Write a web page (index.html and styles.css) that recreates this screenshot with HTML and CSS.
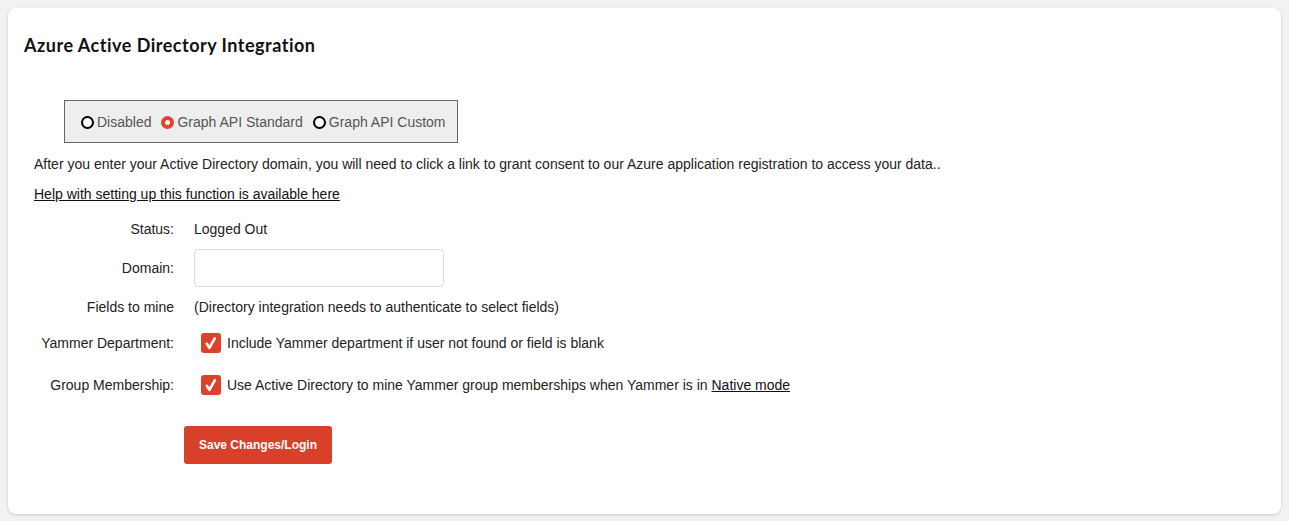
FILE: index.html
```html
<!DOCTYPE html>
<html>
<head>
<meta charset="utf-8">
<link rel="stylesheet" href="styles.css">
</head>
<body>
<div class="card">
  <h2 class="title">Azure Active Directory Integration</h2>
  <div class="radios">
    <span class="radio"><span class="ring"></span>Disabled</span>
    <span class="radio"><span class="ring on"></span>Graph API Standard</span>
    <span class="radio"><span class="ring"></span>Graph API Custom</span>
  </div>
  <p class="intro">After you enter your Active Directory domain, you will need to click a link to grant consent to our Azure application registration to access your data..</p>
  <p class="help"><a href="#">Help with setting up this function is available here</a></p>
  <div class="row r-status"><div class="label">Status:</div><div class="val">Logged Out</div></div>
  <div class="row r-domain"><div class="label">Domain:</div><div class="val"><input class="input" type="text"></div></div>
  <div class="row r-fields"><div class="label">Fields to mine</div><div class="val">(Directory integration needs to authenticate to select fields)</div></div>
  <div class="row r-yam"><div class="label">Yammer Department:</div><div class="val chk"><span class="box"><svg viewBox="0 0 20 20" width="20" height="20"><path d="M5.8 10.8 L8.4 14.8 L13.8 5.4" fill="none" stroke="#fff" stroke-width="2.6" stroke-linecap="round" stroke-linejoin="round"/></svg></span>Include Yammer department if user not found or field is blank</div></div>
  <div class="row r-group"><div class="label">Group Membership:</div><div class="val chk"><span class="box"><svg viewBox="0 0 20 20" width="20" height="20"><path d="M5.8 10.8 L8.4 14.8 L13.8 5.4" fill="none" stroke="#fff" stroke-width="2.6" stroke-linecap="round" stroke-linejoin="round"/></svg></span>Use Active Directory to mine Yammer group memberships when Yammer is in&nbsp;<a href="#">Native mode</a></div></div>
  <button class="btn">Save Changes/Login</button>
</div>
</body>
</html>
```
FILE: styles.css
```css
html, body { margin: 0; padding: 0; }
body {
  background: #f2f2f2;
  font-family: "Liberation Sans", Arial, sans-serif;
  font-size: 14px;
  color: #222;
  padding: 8px;
  height: 521px;
  box-sizing: border-box;
}
.card {
  background: #fff;
  border-radius: 8px;
  box-shadow: 0 1px 3px rgba(0,0,0,0.18);
  padding: 26px 16px 50px 16px;
  height: 506px;
  box-sizing: border-box;
}
.title {
  margin: 0;
  font-family: "Lato", "Open Sans", sans-serif;
  font-weight: 700;
  font-size: 18px;
  line-height: 22px;
  letter-spacing: 0.5px;
  color: #111;
}
.radios {
  display: inline-flex;
  align-items: center;
  margin: 44px 0 0 40px;
  padding: 13px 11px 11px 16px;
  line-height: 17px;
  background: #eee;
  border: 1px solid #666;
  color: #555;
}
.radio { display: inline-flex; align-items: center; margin-right: 10px; }
.radio:last-child { margin-right: 0; }
.ring {
  width: 13px; height: 13px;
  box-sizing: border-box;
  border: 2px solid #000;
  border-radius: 50%;
  margin-right: 3px;
  background: #fff;
}
.ring.on { border: 4px solid #e0442b; }
.intro { margin: 11px 0 0 10px; line-height: 20px; }
.help { margin: 10px 0 0 10px; line-height: 20px; }
a { color: #111; text-decoration: underline; }
.row { display: grid; grid-template-columns: 150px 1fr; column-gap: 20px; align-items: center; line-height: 20px; }
.label { text-align: right; }
.r-status { margin-top: 15px; }
.r-domain { margin-top: 10px; }
.r-fields { margin-top: 10px; }
.r-yam { margin-top: 16px; }
.r-group { margin-top: 22px; }
.input {
  display: block;
  width: 250px; height: 38px;
  box-sizing: border-box;
  border: 1px solid #ddd;
  border-radius: 4px;
  background: #fff;
  margin: 0;
}
.chk { display: flex; align-items: center; }
.box {
  width: 20px; height: 20px;
  background: #db412b;
  border-radius: 3px;
  margin: 0 6px 0 7px;
  display: inline-block;
}
.box svg { display: block; }
.btn {
  display: block;
  margin: 31px 0 0 160px;
  width: 148px; height: 38px;
  background: #d9402a;
  color: #fff;
  border: none;
  border-radius: 3px;
  font-family: "Liberation Sans", Arial, sans-serif;
  font-weight: 700;
  font-size: 12px;
  padding: 0;
}
```
